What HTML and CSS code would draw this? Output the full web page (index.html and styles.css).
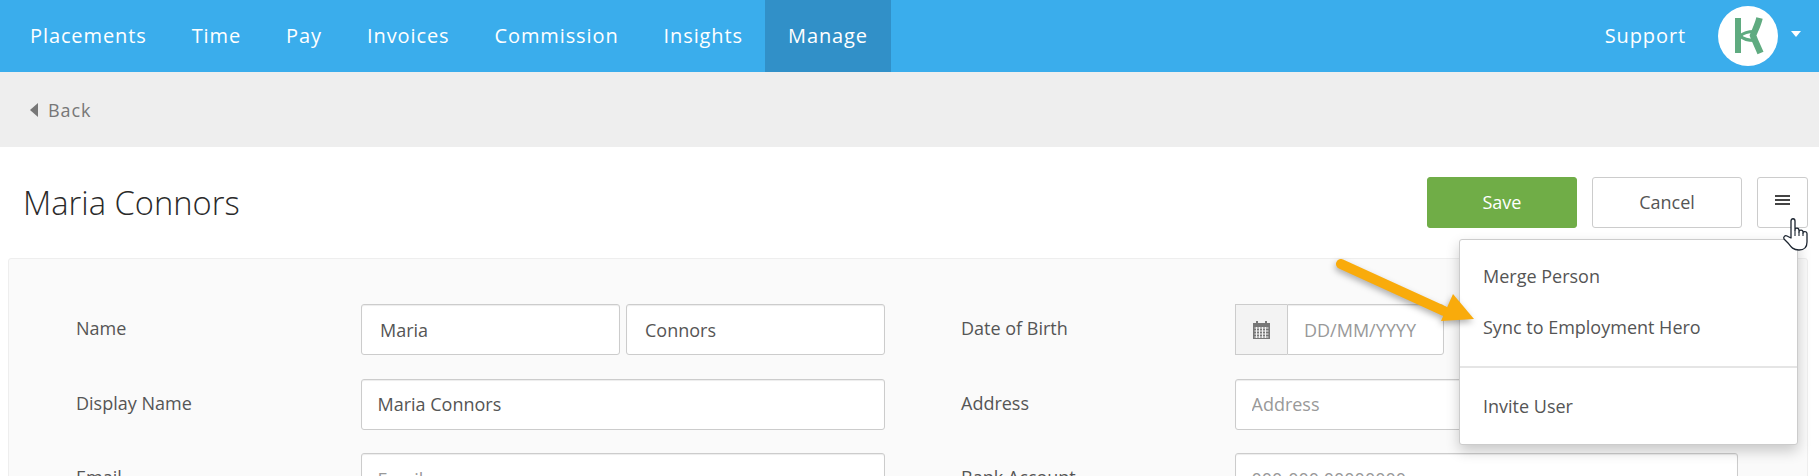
FILE: index.html
```html
<!DOCTYPE html>
<html lang="en">
<head>
    <meta charset="UTF-8">
    <meta name="viewport" content="width=device-width, initial-scale=1.0">
    <title>Maria Connors</title>
    <link rel="stylesheet" href="styles.css">
</head>
<body>

<div class="topnav">
    <a class="nav-link" href="#">Placements</a>
    <a class="nav-link" href="#">Time</a>
    <a class="nav-link" href="#">Pay</a>
    <a class="nav-link" href="#">Invoices</a>
    <a class="nav-link" href="#">Commission</a>
    <a class="nav-link" href="#">Insights</a>
    <a class="nav-link active" href="#">Manage</a>
    <a class="nav-link support" href="#">Support</a>
    <div class="avatar">
        <svg width="36" height="38" viewBox="0 0 36 38" fill="none" stroke="#5fab80">
            <path d="M8 1 V36" stroke-width="6"/>
            <path d="M29.500 1 C28 8 25 13 23 18.500 C25 24 28 30 30.500 36" stroke-width="6.500"/>
            <path d="M10 19 C14 15.500 19 14.500 24 14.500" stroke-width="3"/>
            <path d="M10 19 C14 22.500 19 23.500 24 23.500" stroke-width="3"/>
        </svg>
    </div>
    <span class="caret"></span>
</div>

<div class="backbar">
    <span class="back-arrow"></span>
    <a class="back-link" href="#">Back</a>
</div>

<div class="page-head">
    <h1>Maria Connors</h1>
    <div class="actions">
        <button class="btn btn-save">Save</button>
        <button class="btn">Cancel</button>
        <button class="btn btn-menu">
            <span class="bars"></span>
        </button>
    </div>
</div>

<div class="panel">
    <div class="form-grid">
        <label>Name</label>
        <div class="name-pair">
            <input class="first" type="text" value="Maria">
            <input class="first" type="text" value="Connors">
        </div>
        <label class="right-label">Date of Birth</label>
        <div class="date-group">
            <span class="addon">
                <svg width="17" height="18" viewBox="0 0 17 18">
                    <path d="M3 0 H5 V2 H12 V0 H14 V2 H17 V18 H0 V2 H3 Z" fill="#777"/>
                    <path d="M1.500 7 H15.500 M1.500 10 H15.500 M1.500 13 H15.500 M1.500 16 H15.500 M3.500 6 V17 M6.500 6 V17 M9.500 6 V17 M12.500 6 V17" stroke="#f3f3f3" stroke-width="1" fill="none"/>
                </svg>
            </span>
            <input type="text" placeholder="DD/MM/YYYY">
        </div>

        <label>Display Name</label>
        <input type="text" value="Maria Connors">
        <label class="right-label">Address</label>
        <input type="text" placeholder="Address">

        <label>Email</label>
        <input type="text" placeholder="Email">
        <label class="right-label">Bank Account</label>
        <input type="text" placeholder="000-000 00000000">
    </div>
</div>

<!-- menu opened from the hamburger button -->
<div class="dropdown">
    <a class="menu-item" href="#">Merge Person</a>
    <a class="menu-item" href="#">Sync to Employment Hero</a>
    <hr>
    <a class="menu-item" href="#">Invite User</a>
</div>

<svg class="arrow" width="160" height="90" viewBox="0 0 160 90">
    <path d="M7 6 L110 53" stroke="#f9ab0b" stroke-width="10" stroke-linecap="round" fill="none"/>
    <path d="M119 36 L107 63 L140 61 Z" fill="#f9ab0b"/>
</svg>

<svg class="hand" width="28" height="34" viewBox="0 0 28 34">
    <path d="M9 21 V4 C9 1 13 1 13 4 V13 C13 10.500 17 10.500 17 13.500 V15 C17 12.500 21 12.500 21 15 V16 C21 14 25 14 25 16.500 V25 C25 30 22 33 17 33 C11 33 9 30 6 26 L2 22 C1 20 3 18 5 19 Z" fill="#fff" stroke="#1c2530" stroke-width="1.300" stroke-linejoin="round"/>
    <path d="M13 13 V19 M17 15 V19 M21 16 V19" stroke="#1c2530" stroke-width="1.100" fill="none"/>
</svg>

</body>
</html>
```

FILE: styles.css
```css
html, body {
    height: 476px;
    overflow: hidden;
}

body {
    position: relative;
    margin: 0;
    padding: 0;
    font-family: "Open Sans", Arial, sans-serif;
    font-size: 18px;
    color: #555;
    background-color: #fff;
}

a {
    text-decoration: none;
}

.topnav {
    display: flex;
    align-items: center;
    height: 72px;
    padding-left: 7px;
    background-color: #3aadec;
}

.nav-link {
    display: flex;
    align-items: center;
    height: 70px;
    padding: 0 23px 2px;
    margin-right: -1px;
    font-size: 20px;
    letter-spacing: 0.9px;
    color: #fff;
}

.nav-link.active {
    background-color: #3190c8;
}

.nav-link.support {
    margin-left: auto;
    margin-right: 9px;
}

.avatar {
    display: flex;
    align-items: center;
    justify-content: center;
    width: 60px;
    height: 60px;
    border-radius: 50%;
    background-color: #fff;
}

.caret {
    margin: 0 18px 4px 13px;
    border-top: 6px solid #fff;
    border-left: 5px solid transparent;
    border-right: 5px solid transparent;
}

.backbar {
    display: flex;
    align-items: center;
    gap: 10px;
    height: 75px;
    padding-left: 30px;
    background-color: #eee;
}

.back-arrow {
    border-right: 8px solid #777;
    border-top: 7px solid transparent;
    border-bottom: 7px solid transparent;
}

.back-link {
    font-size: 18px;
    letter-spacing: 0.9px;
    color: #777;
}

.page-head {
    display: flex;
    justify-content: space-between;
    padding: 30px 11px 30px 23px;
}

.page-head h1 {
    margin: 0;
    font-size: 32.7px;
    font-weight: 300;
    line-height: 51px;
    color: #2a2a2a;
}

.actions {
    display: flex;
    gap: 15px;
}

.btn {
    width: 150px;
    height: 51px;
    padding: 0 0 2px;
    font-family: inherit;
    font-size: 18px;
    color: #555;
    background-color: #fff;
    border: 1px solid #ccc;
    border-radius: 3px;
}

.btn-save {
    color: #fff;
    background-color: #70ad47;
    border-color: #70ad47;
}

.btn-menu {
    width: 51px;
    display: flex;
    justify-content: center;
    padding-top: 17px;
}

.bars {
    width: 15px;
    height: 6px;
    border-top: 2px solid #444;
    border-bottom: 2px solid #444;
    background: linear-gradient(#444, #444) center / 100% 2px no-repeat;
}

.panel {
    margin: 0 11px 0 8px;
    height: 300px;
    padding: 45px 0 0 67px;
    background-color: #fafafa;
    border: 1px solid #eee;
    border-radius: 3px;
}

.form-grid {
    display: grid;
    grid-template-columns: 285px 524px 350px 503px;
    grid-auto-rows: 51px;
    row-gap: 23.5px;
}

.form-grid label {
    padding-top: 12px;
    font-size: 18px;
    color: #555;
}

.form-grid .right-label {
    padding-left: 76px;
}

.form-grid input {
    box-sizing: border-box;
    width: 100%;
    height: 51px;
    padding: 0 15.5px;
    font-family: inherit;
    font-size: 18px;
    color: #555;
    background-color: #fff;
    border: 1px solid #ccc;
    border-radius: 3px;
    box-shadow: inset 0 1px 1px rgba(0, 0, 0, 0.075);
}

.form-grid input::placeholder {
    color: #999;
}

.name-pair {
    display: flex;
    gap: 6px;
}

.form-grid .first {
    padding-left: 18px;
}

.date-group {
    display: flex;
    width: 209px;
}

.addon {
    display: flex;
    align-items: center;
    justify-content: center;
    flex: none;
    width: 51px;
    background-color: #f3f3f3;
    border: 1px solid #ccc;
    border-right: none;
}

.form-grid .date-group input {
    padding-left: 16px;
    border-radius: 0 3px 3px 0;
}

.dropdown {
    position: absolute;
    left: 1459px;
    top: 239px;
    box-sizing: border-box;
    width: 339px;
    height: 206px;
    padding: 11px 0 0;
    background-color: #fff;
    border: 1px solid #ccc;
    border-radius: 3px;
    box-shadow: 0 6px 14px rgba(0, 0, 0, 0.2);
}

.menu-item {
    display: block;
    height: 51px;
    line-height: 51px;
    padding-left: 23px;
    font-size: 18px;
    color: #555;
}

.dropdown hr {
    margin: 13px 0 13px;
    border: none;
    border-top: 2px solid #e5e5e5;
}

.arrow {
    position: absolute;
    left: 1334px;
    top: 258px;
    overflow: visible;
    filter: drop-shadow(-1px 3px 3px rgba(0, 0, 0, 0.3));
}

.hand {
    position: absolute;
    left: 1782px;
    top: 217px;
}
```
